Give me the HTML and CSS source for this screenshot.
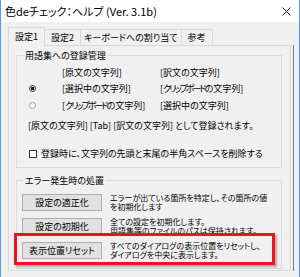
FILE: index.html
```html
<!DOCTYPE html>
<html lang="ja">
<head>
    <meta charset="UTF-8">
    <title>色deチェック：ヘルプ</title>
    <link rel="stylesheet" href="styles.css">
</head>
<body>
    <div class="window">
        <div class="titlebar">
            <span class="title">色deチェック：ヘルプ (Ver. 3.1b)</span>
            <svg class="close" width="9" height="9" viewBox="0 0 9 9">
                <path d="M0.5 0.5L8.5 8.5M8.5 0.5L0.5 8.5" stroke="#222" stroke-width="1"/>
            </svg>
        </div>
        <div class="client">
            <div class="tabs">
                <div class="tab active">設定1</div>
                <div class="tab">設定2</div>
                <div class="tab tab-wide">キーボードへの割り当て</div>
                <div class="tab">参考</div>
            </div>
            <div class="panel">
                <div class="group group-reg">
                    <div class="group-title">用語集への登録管理</div>
                    <div class="choices">
                        <span></span><span>[原文の文字列]</span><span>[訳文の文字列]</span>
                        <span class="radio checked"></span><span>[選択中の文字列]</span><span>[<span class="kana">クリップボード</span>の文字列]</span>
                        <span class="radio"></span><span>[<span class="kana">クリップボード</span>の文字列]</span><span>[選択中の文字列]</span>
                    </div>
                    <p class="note">[原文の文字列] [Tab] [訳文の文字列] として登録されます。</p>
                    <div class="check"><span class="box"></span>登録時に、文字列の先頭と末尾の半角スペースを削除する</div>
                </div>
                <div class="group group-err">
                    <div class="group-title">エラー発生時の処置</div>
                    <div class="action">
                        <button>設定の適正化</button>
                        <p>エラーが出ている箇所を特定し、その箇所の値<br>を初期化します</p>
                    </div>
                    <div class="action">
                        <button>設定の初期化</button>
                        <p>全ての設定を初期化します。<br>用語集等のファイルのパスは保持されます。</p>
                    </div>
                    <div class="action">
                        <button>表示位置リセット</button>
                        <p>すべてのダイアログの表示位置をリセットし、<br>ダイアログを中央に表示します。</p>
                    </div>
                </div>
            </div>
        </div>
        <div class="highlight"></div>
    </div>
</body>
</html>
```

FILE: styles.css
```css
* {
    box-sizing: border-box;
}

body {
    margin: 0;
    font-family: "Noto Sans CJK JP", sans-serif;
    font-size: 9px;
    font-feature-settings: "palt";
    color: #000;
}

.window {
    position: relative;
    width: 300px;
    height: 277px;
    overflow: hidden;
    background: #f0f0f0;
    border-left: 1px solid #5b9ade;
    border-right: 1px solid #5b9ade;
}

.titlebar {
    height: 22px;
    display: flex;
    align-items: center;
    justify-content: space-between;
    padding: 0 8px 0 4px;
    background: #fff;
}

.title {
    font-size: 11px;
}

.client {
    padding: 5px 0 0 7px;
}

.tabs {
    display: flex;
    align-items: flex-end;
    height: 18px;
}

.tab {
    height: 16px;
    line-height: 15px;
    padding: 0 6px;
    border: 1px solid #d9d9d9;
    border-bottom: 0;
    margin-right: -1px;
}

.tab-wide {
    padding: 0 3px;
}

.tab.active {
    position: relative;
    z-index: 1;
    height: 19px;
    line-height: 17px;
    margin-bottom: -1px;
    background: #f0f0f0;
}

.panel {
    position: relative;
    width: 283px;
    height: 226px;
    padding: 9px 8px 0 7px;
    border: 1px solid #d9d9d9;
}

/* dark edge to the right of the tab page */
.panel::after {
    content: "";
    position: absolute;
    top: -1px;
    bottom: -1px;
    right: -4px;
    width: 1px;
    background: #7a7a7a;
}

.group {
    border: 1px solid #dcdcdc;
}

.group-title {
    display: table;
    margin: -6px 0 0 6px;
    padding: 0 2px;
    line-height: 11px;
    background: #f0f0f0;
}

.group-reg {
    padding-bottom: 7px;
}

.choices {
    display: grid;
    grid-template-columns: 33px 98px auto;
    grid-auto-rows: 16.5px;
    align-items: center;
    margin-top: 3px;
    padding-left: 12px;
    white-space: nowrap;
}

.kana {
    letter-spacing: -2px;
}

.radio {
    width: 7px;
    height: 7px;
    border: 1px solid #9a9a9a;
    border-radius: 50%;
    background: #fff;
}

.radio.checked {
    border-color: #333;
    background: radial-gradient(circle, #222 0 1.6px, #fff 2.2px);
}

.note {
    margin: 6px 0 0 11px;
    line-height: 12px;
}

.check {
    display: flex;
    align-items: center;
    gap: 4px;
    height: 12px;
    margin: 16px 0 0 12px;
}

.box {
    width: 8px;
    height: 8px;
    border: 1px solid #333;
    background: #fff;
}

.group-err {
    margin-top: 12px;
    padding: 0 0 8px 5px;
}

.group-err .group-title {
    margin-left: 1px;
    margin-bottom: 7px;
}

.action {
    display: flex;
    align-items: center;
    gap: 8px;
    height: 19px;
    margin-bottom: 5px;
}

.action:last-child {
    margin-bottom: 0;
}

.action button {
    flex: none;
    width: 80px;
    height: 17px;
    padding: 0;
    font: inherit;
    color: #000;
    background: #e1e1e1;
    border: 1px solid #adadad;
}

.action p {
    margin: 0;
    font-size: 8px;
    line-height: 9.5px;
    white-space: nowrap;
}

.highlight {
    position: absolute;
    left: 13px;
    top: 233px;
    width: 261px;
    height: 32px;
    border: 3px solid #e8161b;
    box-shadow: 2px 2px 2px rgba(0, 0, 0, 0.3);
}
```
